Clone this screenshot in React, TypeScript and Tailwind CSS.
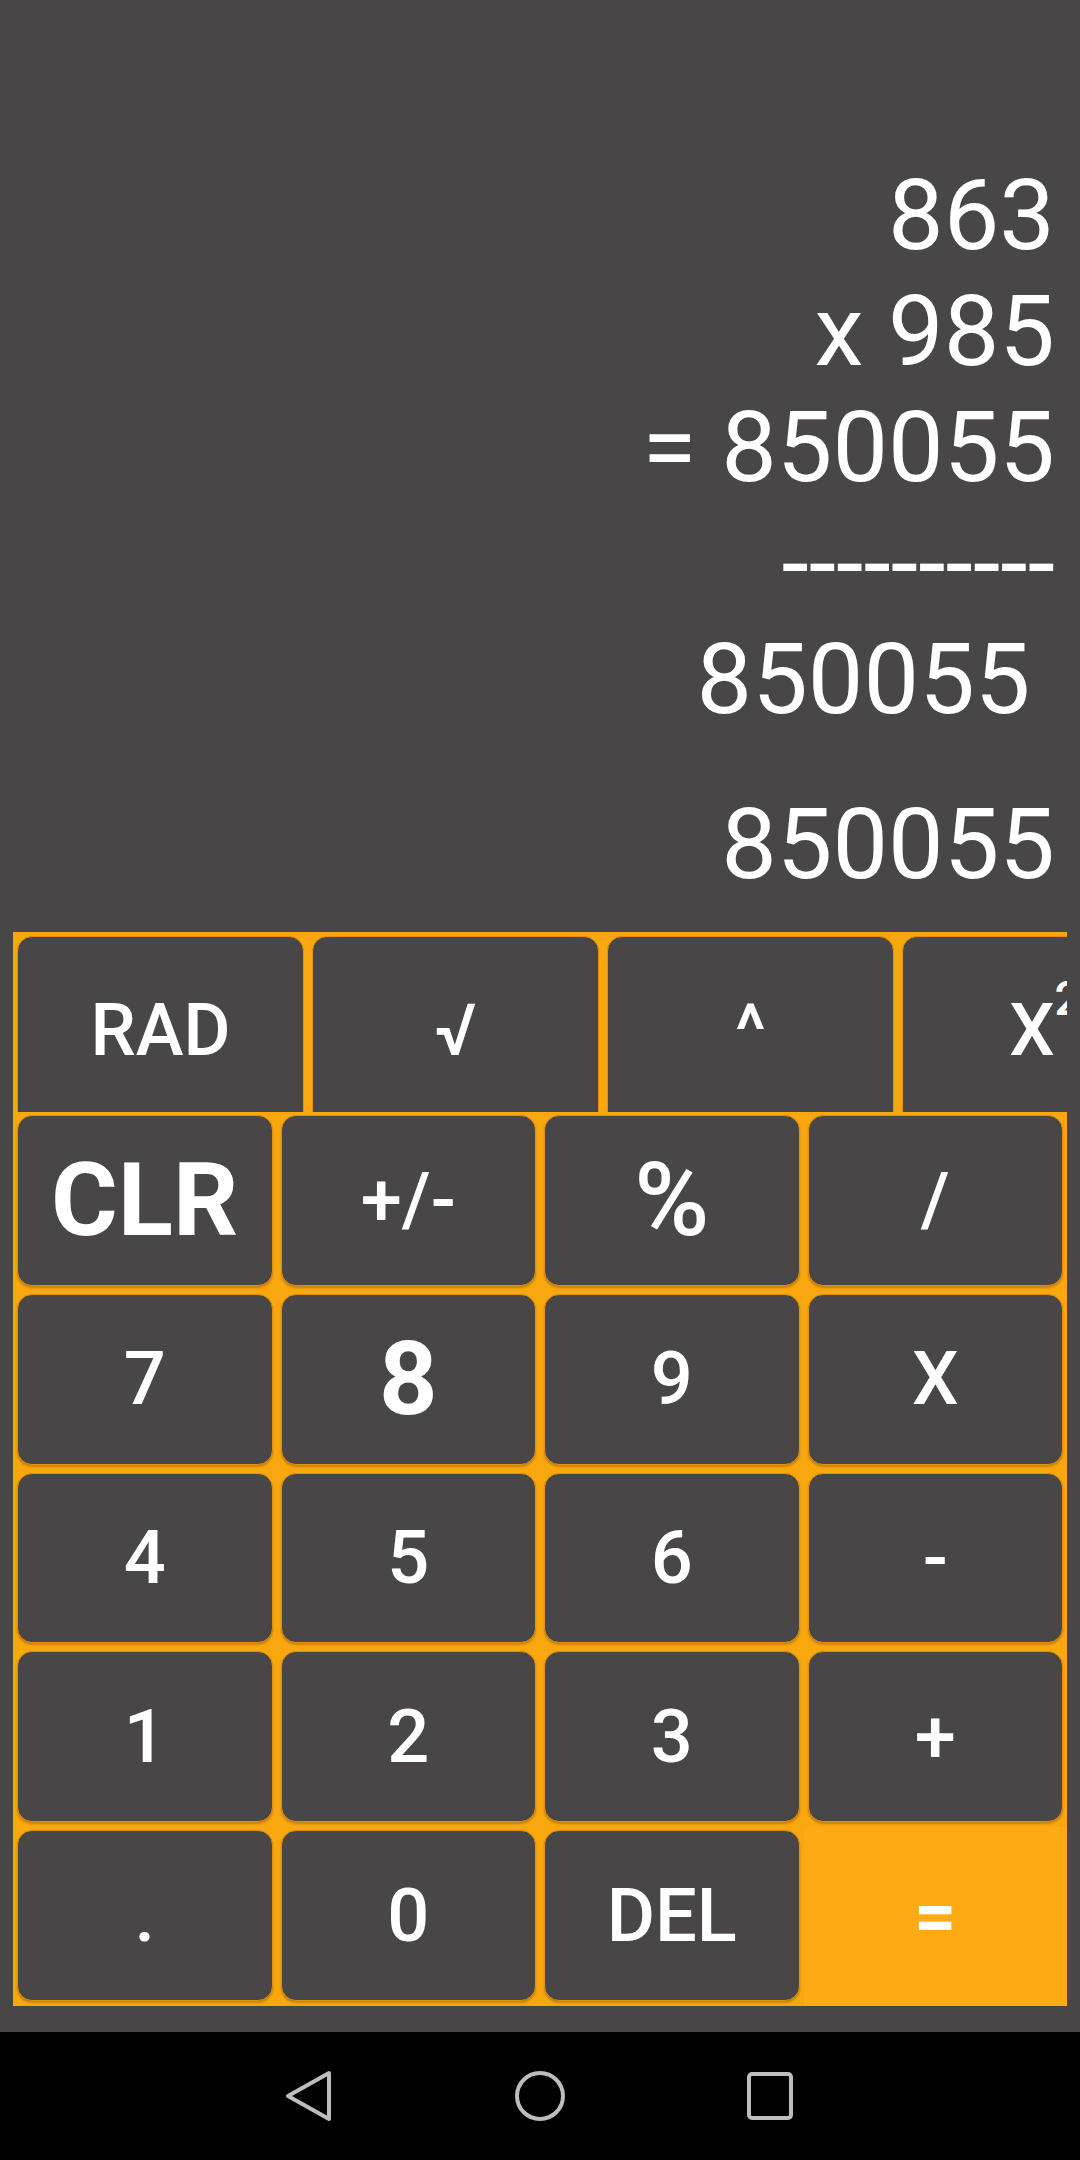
import React from 'react';

const topKeys = ['RAD', '√', '^', 'X²', 'sin'];

interface KeyProps {
  label: string;
  big?: boolean;
  bold?: boolean;
}

const Key: React.FC<KeyProps> = ({ label, big, bold }) => (
  <div className="px-[4px] pt-[3px] pb-[5px] h-full">
    <button
      className={`w-full h-full flex items-center justify-center rounded-[15px] bg-[#484647] border border-[#e2920a] shadow-[0_2px_2px_rgba(120,60,0,0.35)] text-white leading-none ${
        big ? 'text-[102px]' : 'text-[74px]'
      } ${bold ? 'font-bold' : 'font-medium'}`}
    >
      {label}
    </button>
  </div>
);

const App: React.FC = () => {
  const rows: KeyProps[][] = [
    [{ label: 'CLR', big: true, bold: true }, { label: '+/-' }, { label: '%', big: true }, { label: '/' }],
    [{ label: '7' }, { label: '8', big: true, bold: true }, { label: '9' }, { label: 'X' }],
    [{ label: '4' }, { label: '5' }, { label: '6' }, { label: '-' }],
    [{ label: '1' }, { label: '2' }, { label: '3' }, { label: '+' }],
    [{ label: '.' }, { label: '0' }, { label: 'DEL' }],
  ];

  return (
    <div className="w-[1080px] h-[2160px] bg-[#484647] flex flex-col font-[Roboto,sans-serif] text-white overflow-hidden">
      {/* --- Display --- */}
      <div className="flex-1 flex flex-col items-end pt-[157px] pr-[25px]">
        <div className="whitespace-pre text-right text-[99px] leading-[116px] font-normal">
          {'863\nx 985\n= 850055\n----------\n850055 '}
        </div>
        <div className="mt-[49px] text-[99px] leading-[116px] font-normal">850055</div>
      </div>

      {/* --- Keypad --- */}
      <div className="mx-[13px] bg-[#f9a70e] flex flex-col">
        {/* scrolling function row */}
        <div className="h-[180px] overflow-hidden flex gap-[8px] pl-[4px] pt-[4px]">
          {topKeys.map((k) => (
            <button
              key={k}
              className="shrink-0 w-[287px] h-[190px] flex items-center justify-center rounded-[15px] bg-[#484647] border border-[#e2920a] text-white text-[72px] font-medium leading-none"
            >
              {k === 'X²' ? (
                <span>
                  X<sup className="text-[48px] align-[16px]">2</sup>
                </span>
              ) : (
                k
              )}
            </button>
          ))}
        </div>

        <div className="grid grid-cols-4 grid-rows-5 h-[894px]">
          {rows.map((row, i) =>
            row.map((k) => <Key key={`${i}-${k.label}`} {...k} />)
          )}
          <div className="bg-[#fcab12] flex items-center justify-center text-[74px] font-bold leading-none">
            =
          </div>
        </div>
      </div>

      <div className="h-[26px]" />

      {/* --- Navigation bar --- */}
      <div className="h-[128px] bg-black flex items-center justify-center gap-[180px]">
        <svg width="50" height="52" viewBox="0 0 50 52" fill="none" stroke="#bdbdbd" strokeWidth="4" strokeLinejoin="round">
          <path d="M44 3 L3 26 L44 49 Z" />
        </svg>
        <svg width="50" height="52" viewBox="0 0 50 52" fill="none" stroke="#bdbdbd" strokeWidth="4">
          <circle cx="25" cy="26" r="23" />
        </svg>
        <svg width="50" height="52" viewBox="0 0 50 52" fill="none" stroke="#bdbdbd" strokeWidth="4">
          <rect x="4" y="4" width="42" height="44" rx="3" />
        </svg>
      </div>
    </div>
  );
};

export default App;
